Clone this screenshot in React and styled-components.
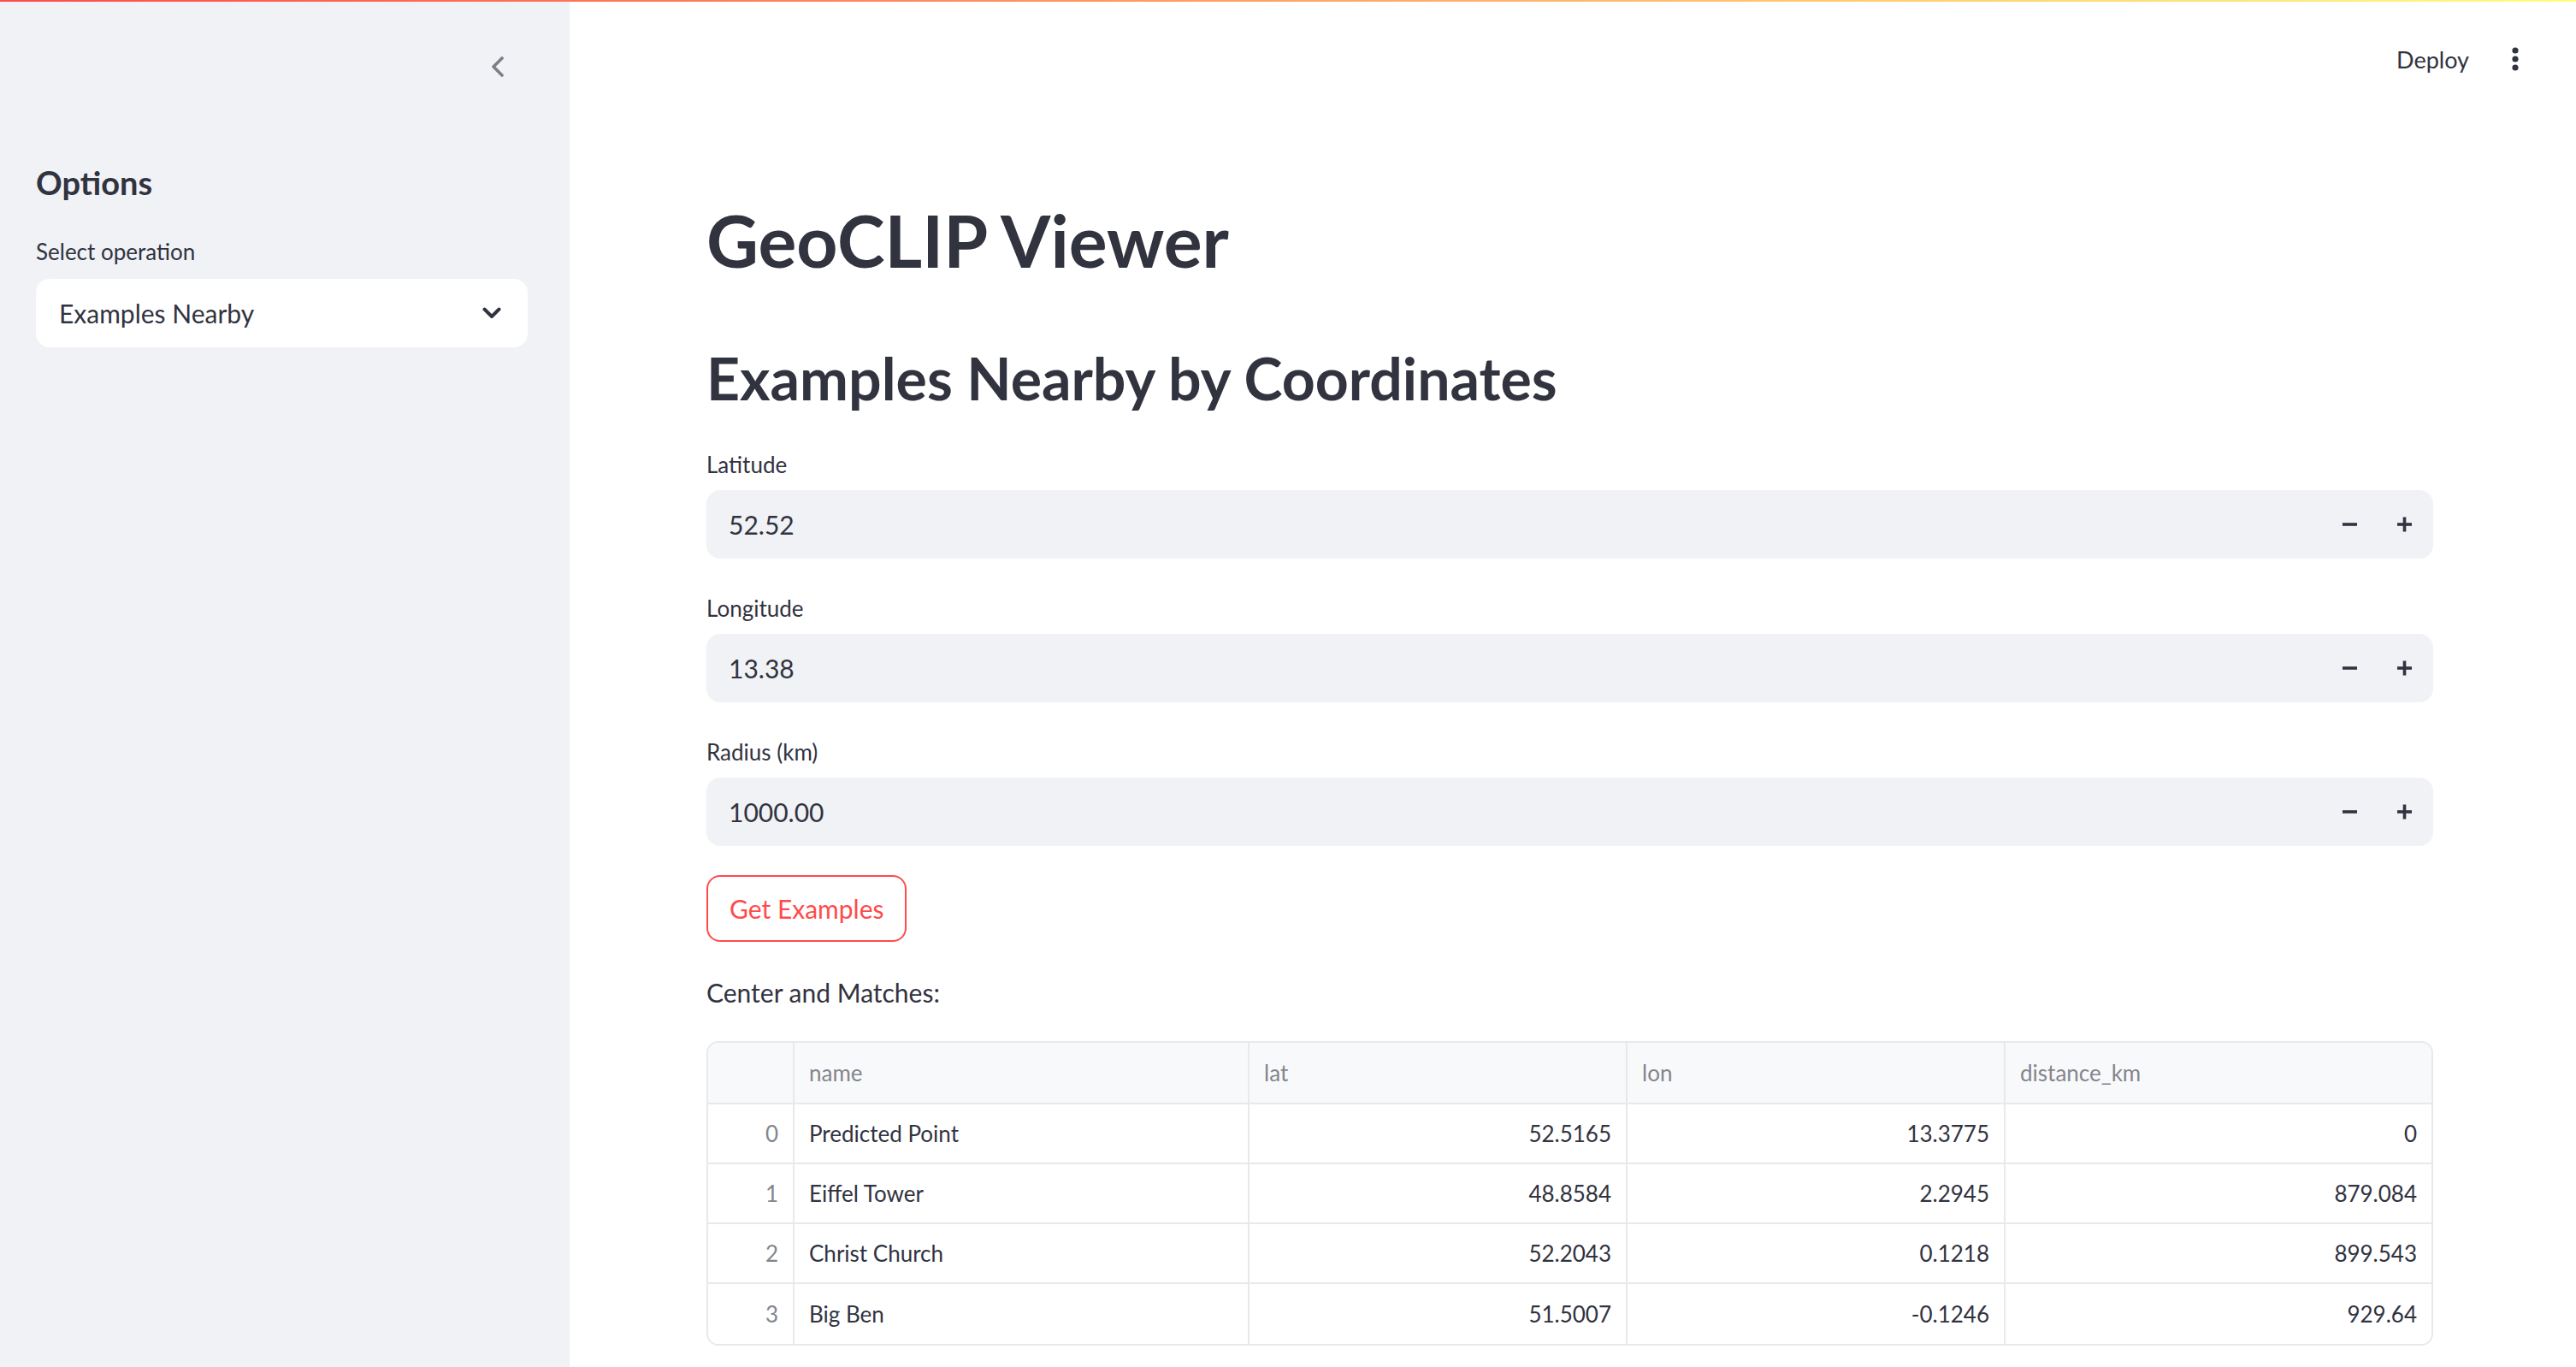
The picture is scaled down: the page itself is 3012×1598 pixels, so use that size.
import React from 'react'
import styled, { createGlobalStyle } from 'styled-components'

const GlobalStyle = createGlobalStyle`
  html, body {
    margin: 0;
    padding: 0;
    background: #ffffff;
    font-family: Lato, "Noto Sans", "Liberation Sans", sans-serif;
    color: #31333f;
  }
  * { box-sizing: border-box; }
`

const Shell = styled.div`
  position: relative;
  display: flex;
  width: 100%;
  height: 100vh;
  overflow: hidden;
`

const Decoration = styled.div`
  position: absolute;
  top: 0;
  left: 0;
  right: 0;
  height: 2px;
  background: linear-gradient(90deg, #ff4b4b, #fffd80);
  z-index: 2;
`

const Sidebar = styled.aside`
  width: 666px;
  flex-shrink: 0;
  background: #f0f2f6;
  padding: 0 49px 0 42px;
  display: flex;
  flex-direction: column;
`

const SidebarTop = styled.div`
  height: 156px;
  display: flex;
  align-items: center;
  justify-content: flex-end;
  padding-right: 27px;
`

const IconButton = styled.button`
  border: none;
  background: transparent;
  padding: 0;
  display: flex;
  align-items: center;
  justify-content: center;
  color: ${props => props.muted ? '#7d7f88' : '#31333f'};
`

const SideHeading = styled.h2`
  margin: 33px 0 0;
  font-size: 38px;
  line-height: 48px;
  font-weight: 700;
  color: #31333f;
`

const Label = styled.label`
  display: flex;
  align-items: center;
  height: 48px;
  margin-top: ${props => props.top || 0}px;
  margin-bottom: ${props => props.gap || 6}px;
  font-size: 26px;
  color: #31333f;
`

const SelectBox = styled.div`
  height: 80px;
  background: #ffffff;
  border-radius: 16px;
  display: flex;
  align-items: center;
  justify-content: space-between;
  padding: 0 31px 0 27px;
  font-size: 30px;
  color: #31333f;
`

const Main = styled.main`
  flex: 1;
  display: flex;
  flex-direction: column;
  padding: 0 167px 0 160px;
  position: relative;
`

const Header = styled.header`
  position: absolute;
  top: 0;
  right: 0;
  height: 138px;
  display: flex;
  align-items: center;
  gap: 50px;
  padding-right: 67px;
`

const DeployButton = styled.button`
  border: none;
  background: transparent;
  font-family: inherit;
  font-size: 27px;
  color: #31333f;
  padding: 0;
`

const Title = styled.h1`
  margin: 228px 0 0;
  font-size: 84px;
  line-height: 106px;
  font-weight: 700;
  color: #31333f;
`

const Subtitle = styled.h2`
  margin: 67px 0 36px;
  font-size: 68px;
  line-height: 82px;
  font-weight: 700;
  color: #31333f;
`

const Field = styled.div`
  display: flex;
  flex-direction: column;
  margin-bottom: 34px;
`

const NumberBox = styled.div`
  height: 80px;
  background: #f0f2f6;
  border-radius: 16px;
  display: flex;
  align-items: center;
`

const NumberValue = styled.div`
  flex: 1;
  padding-left: 26px;
  font-size: 30px;
  color: #31333f;
`

const StepButton = styled.button`
  width: 64px;
  height: 80px;
  border: none;
  background: transparent;
  display: flex;
  align-items: center;
  justify-content: center;
  padding: 0;
  color: #31333f;
  &:last-child { margin-right: 2px; }
`

const PrimaryButton = styled.button`
  align-self: flex-start;
  height: 78px;
  padding: 0 25px;
  border: 2px solid #ff4b4b;
  border-radius: 16px;
  background: #ffffff;
  color: #ff4b4b;
  font-family: inherit;
  font-size: 30px;
  margin-bottom: 34px;
`

const Paragraph = styled.p`
  margin: 0 0 32px;
  height: 50px;
  display: flex;
  align-items: center;
  font-size: 30px;
  color: #31333f;
`

const Table = styled.div`
  border: 2px solid #e8e9ec;
  border-radius: 14px;
  overflow: hidden;
  display: grid;
  grid-template-columns: 101px 532px 442px 442px 1fr;
`

const Cell = styled.div`
  height: ${props => props.head ? 72 : 70}px;
  display: flex;
  align-items: center;
  justify-content: ${props => props.right ? 'flex-end' : 'flex-start'};
  padding: 0 17px;
  font-size: 26px;
  color: ${props => props.dim ? '#84858c' : '#31333f'};
  background: ${props => props.head ? '#f8f9fb' : '#ffffff'};
  border-right: ${props => props.last ? 'none' : '2px solid #e8e9ec'};
  border-bottom: ${props => props.end ? 'none' : '2px solid #e8e9ec'};
`

const ChevronLeft = () => (
  <svg width="16" height="24" viewBox="0 0 16 24" fill="none">
    <path d="M13 2 L3 12 L13 22" stroke="currentColor" strokeWidth="3.6" strokeLinecap="round" strokeLinejoin="round" />
  </svg>
)

const ChevronDown = () => (
  <svg width="22" height="14" viewBox="0 0 22 14" fill="none">
    <path d="M2.5 2.5 L11 11 L19.5 2.5" stroke="currentColor" strokeWidth="4" strokeLinecap="round" strokeLinejoin="round" />
  </svg>
)

const Kebab = () => (
  <svg width="8" height="28" viewBox="0 0 8 28" fill="currentColor">
    <circle cx="4" cy="4" r="3.6" />
    <circle cx="4" cy="14" r="3.6" />
    <circle cx="4" cy="24" r="3.6" />
  </svg>
)

const MinusIcon = () => (
  <svg width="17" height="16" viewBox="0 0 17 16">
    <rect x="0" y="6.2" width="17" height="3.6" fill="currentColor" />
  </svg>
)

const PlusIcon = () => (
  <svg width="17" height="18" viewBox="0 0 17 18">
    <rect x="0" y="7.2" width="17" height="3.6" fill="currentColor" />
    <rect x="6.7" y="0.5" width="3.6" height="17" fill="currentColor" />
  </svg>
)

const fields = [
  { label: 'Latitude', value: '52.52' },
  { label: 'Longitude', value: '13.38' },
  { label: 'Radius (km)', value: '1000.00' },
]

const columns = ['', 'name', 'lat', 'lon', 'distance_km']

const rows = [
  ['0', 'Predicted Point', '52.5165', '13.3775', '0'],
  ['1', 'Eiffel Tower', '48.8584', '2.2945', '879.084'],
  ['2', 'Christ Church', '52.2043', '0.1218', '899.543'],
  ['3', 'Big Ben', '51.5007', '-0.1246', '929.64'],
]

export default function App() {
  return (
    <>
      <GlobalStyle />
      <Shell>
        <Decoration />
        <Sidebar>
          <SidebarTop>
            <IconButton muted><ChevronLeft /></IconButton>
          </SidebarTop>
          <SideHeading>Options</SideHeading>
          <Label top={33} gap={8}>Select operation</Label>
          <SelectBox>
            <span>Examples Nearby</span>
            <ChevronDown />
          </SelectBox>
        </Sidebar>
        <Main>
          <Header>
            <DeployButton>Deploy</DeployButton>
            <IconButton><Kebab /></IconButton>
          </Header>
          <Title>GeoCLIP Viewer</Title>
          <Subtitle>Examples Nearby by Coordinates</Subtitle>
          {fields.map(f => (
            <Field key={f.label}>
              <Label>{f.label}</Label>
              <NumberBox>
                <NumberValue>{f.value}</NumberValue>
                <StepButton><MinusIcon /></StepButton>
                <StepButton><PlusIcon /></StepButton>
              </NumberBox>
            </Field>
          ))}
          <PrimaryButton>Get Examples</PrimaryButton>
          <Paragraph>Center and Matches:</Paragraph>
          <Table>
            {columns.map((c, i) => (
              <Cell key={c || 'idx'} head dim last={i === columns.length - 1}>{c}</Cell>
            ))}
            {rows.map((r, ri) => r.map((v, ci) => (
              <Cell
                key={ri + '-' + ci}
                right={ci !== 1}
                dim={ci === 0}
                last={ci === r.length - 1}
                end={ri === rows.length - 1}
              >
                {v}
              </Cell>
            )))}
          </Table>
        </Main>
      </Shell>
    </>
  )
}
